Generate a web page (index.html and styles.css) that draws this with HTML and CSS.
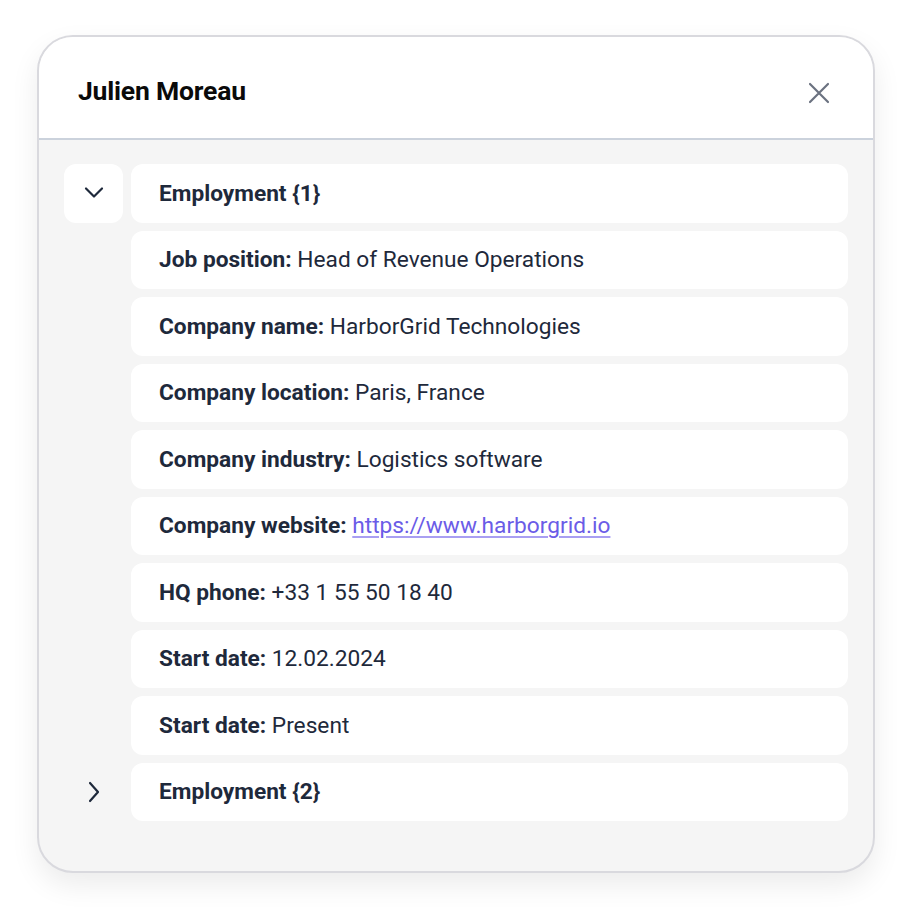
FILE: index.html
```html
<!DOCTYPE html>
<html>
<head>
<meta charset="utf-8">
<link rel="stylesheet" href="styles.css">
</head>
<body>
<div class="card">
  <div class="header">
    <h1 class="title">Julien Moreau</h1>
    <button class="close" aria-label="Close">
      <svg width="22" height="22" viewBox="0 0 22 22" fill="none" stroke="#6b7280" stroke-width="2.2" stroke-linecap="round"><path d="M2 2L20 20M20 2L2 20"/></svg>
    </button>
  </div>
  <div class="body">
    <div class="line">
      <div class="toggle open">
        <svg width="22" height="22" viewBox="0 0 22 22" fill="none" stroke="#1e293b" stroke-width="2.2" stroke-linecap="round" stroke-linejoin="round"><path d="M3 6.5L11 14.5L19 6.5"/></svg>
      </div>
      <div class="row"><span><b>Employment {1}</b></span></div>
    </div>
    <div class="line"><div class="spacer"></div><div class="row"><span><b>Job position:</b> Head of Revenue Operations</span></div></div>
    <div class="line"><div class="spacer"></div><div class="row"><span><b>Company name:</b> HarborGrid Technologies</span></div></div>
    <div class="line"><div class="spacer"></div><div class="row"><span><b>Company location:</b> Paris, France</span></div></div>
    <div class="line"><div class="spacer"></div><div class="row"><span><b>Company industry:</b> Logistics software</span></div></div>
    <div class="line"><div class="spacer"></div><div class="row"><span><b>Company website:</b> <a class="link" href="#">https://www.harborgrid.io</a></span></div></div>
    <div class="line"><div class="spacer"></div><div class="row"><span><b>HQ phone:</b> +33 1 55 50 18 40</span></div></div>
    <div class="line"><div class="spacer"></div><div class="row"><span><b>Start date:</b> 12.02.2024</span></div></div>
    <div class="line"><div class="spacer"></div><div class="row"><span><b>Start date:</b> Present</span></div></div>
    <div class="line">
      <div class="toggle">
        <svg width="22" height="22" viewBox="0 0 22 22" fill="none" stroke="#1e293b" stroke-width="2.2" stroke-linecap="round" stroke-linejoin="round"><path d="M7 2L15 11L7 20"/></svg>
      </div>
      <div class="row"><span><b>Employment {2}</b></span></div>
    </div>
  </div>
</div>
</body>
</html>
```
FILE: styles.css
```css
* { box-sizing: border-box; }
html, body { margin: 0; background: #ffffff; }
body {
  padding: 35px 37px;
  font-family: Roboto, "Liberation Sans", Arial, sans-serif;
}
.card {
  width: 838px;
  height: 838px;
  border: 2px solid #d9d9de;
  border-radius: 36px;
  background: #f5f5f5;
  overflow: hidden;
  box-shadow: 0 12px 28px rgba(0, 0, 0, 0.08);
  display: flex;
  flex-direction: column;
}
.header {
  background: #ffffff;
  height: 103px;
  border-bottom: 2px solid #cbd2dc;
  display: flex;
  align-items: center;
  justify-content: space-between;
  padding: 6px 43px 0 39px;
  flex-shrink: 0;
}
.title {
  margin: 0;
  font-size: 26.5px;
  font-weight: 700;
  color: #0a0a0a;
  letter-spacing: -0.2px;
}
.close {
  border: 0;
  background: transparent;
  padding: 0;
  margin-top: 4px;
  width: 22px;
  height: 22px;
  display: flex;
  cursor: pointer;
}
.body {
  padding: 24px 25px 0 25px;
  display: flex;
  flex-direction: column;
  gap: 8px;
}
.line {
  display: flex;
  gap: 8px;
}
.toggle, .spacer {
  width: 59px;
  height: 58.5px;
  flex-shrink: 0;
  display: flex;
  align-items: center;
  justify-content: center;
  border-radius: 12px;
}
.toggle.open { background: #ffffff; }
.row {
  flex: 1;
  height: 58.5px;
  background: #ffffff;
  border-radius: 12px;
  display: flex;
  align-items: center;
  padding-left: 28px;
  font-size: 22.7px;
  color: #1e293b;
}
.row span { white-space: pre; }
.row b { font-weight: 700; }
.link {
  color: #6b5ce7;
  text-decoration: underline;
  text-decoration-color: #a99ff2;
  text-underline-offset: 3px;
}
```
